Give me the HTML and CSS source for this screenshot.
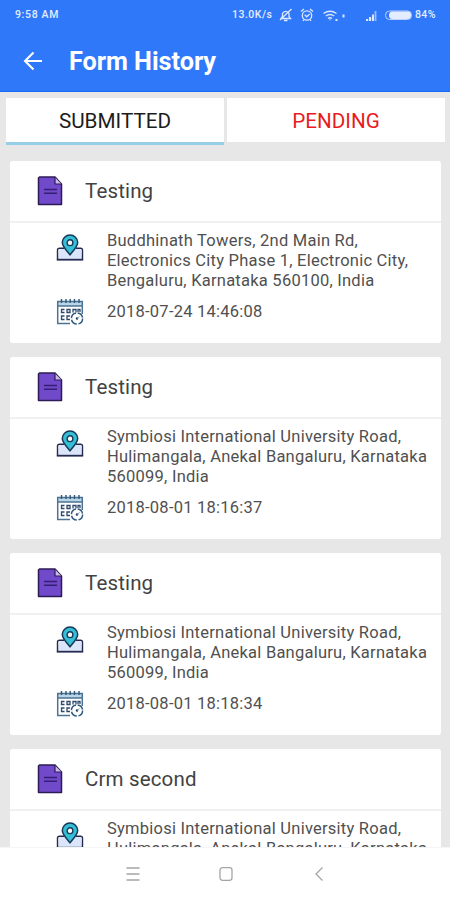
FILE: index.html
```
<!DOCTYPE html>
<html lang="en">
<head>
<meta charset="utf-8">
<title>Form History</title>
<link rel="stylesheet" href="styles.css">
</head>
<body>
<svg class="defs" width="0" height="0" aria-hidden="true">
  <symbol id="doc" viewBox="0 0 26 30">
    <path d="M2.500 1H18l6.500 7v20.500H1.500V2Z" fill="#704acb" stroke="#2c1b55" stroke-width="1.500" stroke-linejoin="round"/>
    <path d="M18 1.500V8h6.500" fill="#c9bbe4" stroke="#2c1b55" stroke-width="1.200"/>
    <path d="M7 13.500h13M7 17.200h13" stroke="#351f72" stroke-width="1.500"/>
  </symbol>
  <symbol id="pin" viewBox="0 0 28 28">
    <path d="M5 14.500h18q1.500 0 2 2l1.500 8.800H1.500L3 16.500q.5-2 2-2Z" fill="#dce6fb"/>
    <path d="M1.500 25.500V16q0-1.800 2-1.800H8M20 14.200h4.500q2 0 2 1.800v9.500" fill="none" stroke="#252b50" stroke-width="1.400"/>
    <path d="M.8 25.700h26.400" stroke="#252b50" stroke-width="1.800"/>
    <path d="M14 20.800C10.500 16.500 6.300 12.600 6.300 8.600a7.700 7.500 0 0 1 15.400 0c0 4-4.200 7.900-7.700 12.200Z" fill="#35bfd4" stroke="#18385a" stroke-width="1.500"/>
    <circle cx="14" cy="8.700" r="2.900" fill="#fff" stroke="#18385a" stroke-width="1.400"/>
  </symbol>
  <symbol id="cal" viewBox="0 0 28 28">
    <path d="M1.500 3.500h25V8h-25Z" fill="#b9d5e8"/>
    <path d="M14 25.500H1.700V3.500h24.600V16M1.500 8h25" fill="none" stroke="#4d7394" stroke-width="1.500"/>
    <path d="M5.500 1v4M10 1v4M14.200 1v4M18.500 1v4M23 1v4" stroke="#355777" stroke-width="1.400"/>
    <path d="M8.500 11.500H5.500v3h3M11 11.500h3v3h-3ZM17 14.500v-3h3v3M22 14v-2.500h2V14M8.500 18H5.500v3.500h3M14 18h-3v3.500h3" fill="none" stroke="#2f496d" stroke-width="1.300"/>
    <circle cx="21" cy="20.500" r="5.600" fill="#fff" stroke="#315b80" stroke-width="1.500" stroke-dasharray="7 1.800"/>
    <circle cx="21" cy="20.500" r="1.200" fill="#20395c"/>
    <path d="M21 20.500l2.500-2" stroke="#7897ae"/>
  </symbol>
</svg>
<div class="screen">
  <header class="header">
    <div class="status">
      <span class="time">9:58 AM</span>
      <span class="speed">13.0K/s</span>
      <svg class="status-icons" viewBox="0 0 134 18" fill="none" stroke="#dce7ff" stroke-width="1.300">
        <path d="M3 12.500h9.500l-1.500-2V7.500a3.500 3.500 0 0 0-6.500 0v3ZM6 14.500h3.500M2 14 13.500 3"/>
        <circle cx="29" cy="9.500" r="4.700"/><path d="M26.700 8.800l2 2 3-2.800M23 5.500l3-2.500M35 5.500l-3-2.500M26 13.500l-1 1.500M32 13.500l1 1.500"/>
        <path d="M45.500 7.500q6.500-4.500 13 0M47.800 10q4.200-3 8.400 0M50 12.500q2-1.500 4 0"/>
        <path d="M51 13.500h2l-1 1.300ZM57.500 13h2v2h-2ZM64.500 8.500h2v3h-2Z" fill="#dce7ff" stroke="none"/>
        <path d="M88 15v-2h2.200v2ZM91 15v-4h2.200v4ZM94 15V8.500h2V15Z" fill="#dce7ff" stroke="none"/><path d="M97.500 15V5" stroke="#9dbdff" stroke-width="1.800"/>
        <rect x="107.500" y="5" width="26" height="8.500" rx="4" stroke="#bed1ff" stroke-width="1"/><rect x="111" y="5.500" width="22" height="7.500" rx="3.500" fill="#e4ecff" stroke="none"/>
      </svg>
      <span class="battery">84%</span>
    </div>
    <div class="title-row">
      <svg class="back" viewBox="0 0 20 20" fill="none" stroke="#fff" stroke-width="2.100"><path d="M10.500 1.500 2 10l8.500 8.500M2 10h17"/></svg>
      <h1>Form History</h1>
    </div>
  </header>
  <nav class="tabs">
    <div class="tab active"><span>SUBMITTED</span></div>
    <div class="tab pending"><span>PENDING</span></div>
  </nav>
  <main class="list">
    <article class="card">
      <div class="card-head"><svg class="doc"><use href="#doc"/></svg><h2>Testing</h2></div>
      <div class="card-body">
        <svg class="icon"><use href="#pin"/></svg>
        <p class="address">Buddhinath Towers, 2nd Main Rd,<br>Electronics City Phase 1, Electronic City,<br>Bengaluru, Karnataka 560100, India</p>
        <svg class="icon"><use href="#cal"/></svg>
        <p class="date">2018-07-24 14:46:08</p>
      </div>
    </article>
    <article class="card">
      <div class="card-head"><svg class="doc"><use href="#doc"/></svg><h2>Testing</h2></div>
      <div class="card-body">
        <svg class="icon"><use href="#pin"/></svg>
        <p class="address">Symbiosi International University Road,<br>Hulimangala, Anekal Bangaluru, Karnataka<br>560099, India</p>
        <svg class="icon"><use href="#cal"/></svg>
        <p class="date">2018-08-01 18:16:37</p>
      </div>
    </article>
    <article class="card">
      <div class="card-head"><svg class="doc"><use href="#doc"/></svg><h2>Testing</h2></div>
      <div class="card-body">
        <svg class="icon"><use href="#pin"/></svg>
        <p class="address">Symbiosi International University Road,<br>Hulimangala, Anekal Bangaluru, Karnataka<br>560099, India</p>
        <svg class="icon"><use href="#cal"/></svg>
        <p class="date">2018-08-01 18:18:34</p>
      </div>
    </article>
    <article class="card">
      <div class="card-head"><svg class="doc"><use href="#doc"/></svg><h2>Crm second</h2></div>
      <div class="card-body">
        <svg class="icon"><use href="#pin"/></svg>
        <p class="address">Symbiosi International University Road,<br>Hulimangala, Anekal Bangaluru, Karnataka</p>
      </div>
    </article>
  </main>
  <footer class="navbar">
    <svg viewBox="0 0 14 16"><path d="M.5 2h13M.5 8h13M.5 14h13"/></svg>
    <svg viewBox="0 0 14 16"><rect x="1" y="1.700" width="12" height="12.600" rx="2.500"/></svg>
    <svg viewBox="0 0 14 16"><path d="M10.500 1.500 4 8l6.500 6.500"/></svg>
  </footer>
</div>
</body>
</html>
```
FILE: styles.css
```
* { box-sizing: border-box; }
body { margin: 0; font-family: Roboto, sans-serif; }
h1, h2, p { margin: 0; font-weight: 400; }
.defs { display: none; }
.screen { display: flex; flex-direction: column; width: 450px; height: 900px; overflow: hidden; background: #e7e7e7; }
.header { flex: none; height: 92px; background: #3078fa; border-bottom: 1px solid #1768f2; color: #fff; }
.status { display: flex; align-items: center; height: 30px; padding-left: 15px; color: #e5edff; font-size: 10.5px; font-weight: 500; line-height: 30px; }
.time { width: 217px; letter-spacing: .65px; }
.speed { width: 46px; letter-spacing: .5px; }
.status-icons { width: 134px; height: 18px; }
.battery { margin-left: 3px; letter-spacing: .4px; white-space: nowrap; }
.title-row { display: flex; align-items: center; height: 62px; padding-left: 23px; }
.back { width: 20px; height: 20px; margin-right: 26px; }
h1 { padding-top: 2px; font-size: 25.3px; font-weight: 700; line-height: 32px; letter-spacing: -.05px; white-space: nowrap; }
.tabs { flex: none; display: grid; grid-template-columns: 218px 218px; gap: 3px; height: 47px; margin: 6px 0 16px 6px; }
.tab { display: flex; align-items: center; justify-content: center; height: 44px; padding-top: 2px; background: #fff; font-size: 20.7px; color: #1c1c1c; }
.active { height: 47px; border-bottom: 3px solid #95cfe5; }
.pending { color: #ea1a1e; }
.list { flex: 1; min-height: 0; overflow: hidden; padding: 0 9px 0 10px; }
.card { height: 182px; margin-bottom: 14px; background: #fff; border-radius: 3px; }
.card-head { display: flex; align-items: center; height: 62px; padding-left: 27px; border-bottom: 2px solid #f0f0f0; }
.doc { width: 26px; height: 30px; margin-right: 22px; }
h2 { color: #424242; font-size: 20.5px; line-height: 28px; letter-spacing: .15px; }
.card-body { display: grid; grid-template-columns: 28px 1fr; column-gap: 23px; row-gap: 9px; padding: 8px 0 0 46px; }
.icon { width: 28px; height: 28px; margin-top: 3px; }
.address, .date { color: #505050; font-size: 16.5px; line-height: 20px; letter-spacing: .24px; white-space: nowrap; }
.date { line-height: 24px; }
.card-body .icon:nth-of-type(2) { margin-top: -2px; }
.navbar { flex: none; display: flex; align-items: center; justify-content: center; gap: 77px; height: 53px; padding-left: 2px; background: #fff; border-top: 1px solid #f5f5f5; }
.navbar svg { width: 16px; height: 16px; fill: none; stroke: #a5a5a5; stroke-width: 1.300; }
```
